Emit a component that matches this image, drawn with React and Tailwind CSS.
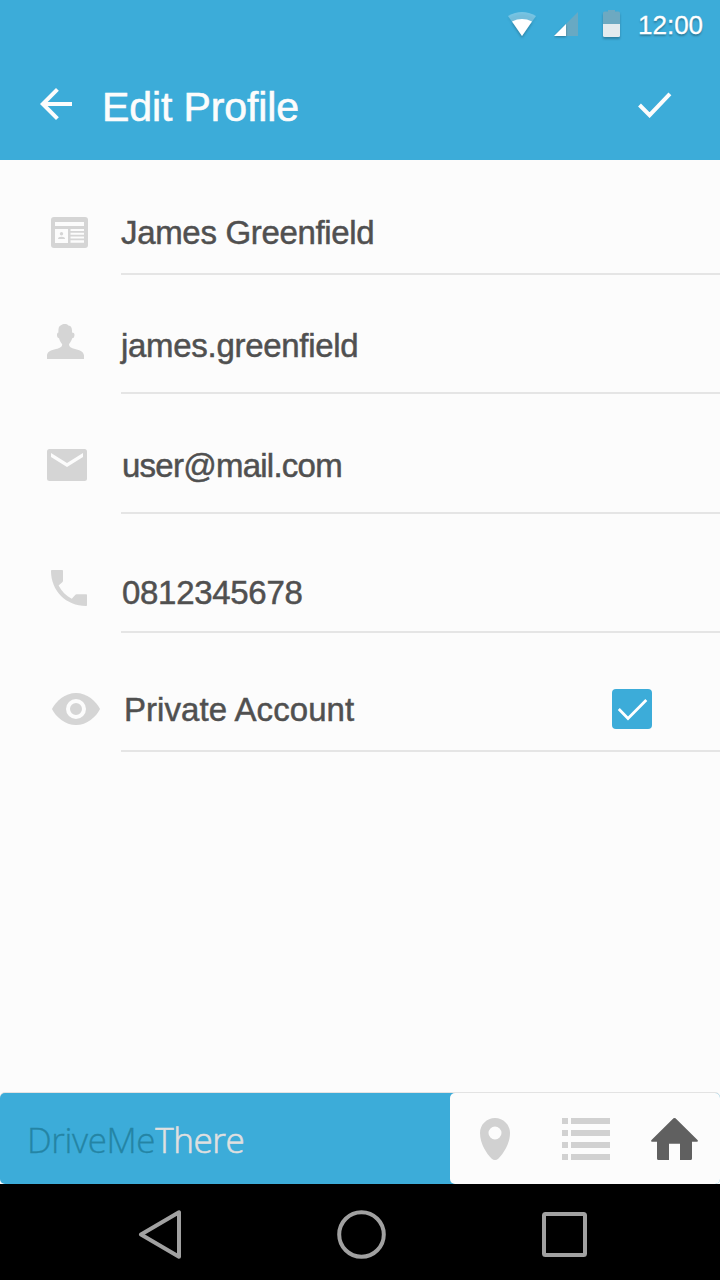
import React from "react";

function StatusBar() {
  return (
    <div className="flex h-12 items-start">
      <svg className="ml-[504px] mt-2 shrink-0 drop-shadow-[0_2px_1px_rgba(0,0,0,0.22)]" width="36" height="32" viewBox="504 8 36 32">
        <path d="M508 16 Q522 8 536 16 L522 36 Z" fill="#fff" fillOpacity=".3" />
        <path d="M512 21.500 Q522 16.600 532 21.500 L522 36 Z" fill="#fff" />
      </svg>
      <svg className="ml-[14px] mt-2 shrink-0" width="26" height="32" viewBox="554 8 26 32">
        <path d="M578 12 V36 H554 Z" fill="#68a9c3" />
        <path className="drop-shadow-[0_1px_1px_rgba(0,0,0,0.3)]" d="M566 24 V36 H554 Z" fill="#fff" />
      </svg>
      <svg className="ml-[21px] mt-2 shrink-0 drop-shadow-[0_2px_1px_rgba(0,0,0,0.25)]" width="22" height="32" viewBox="601 8 22 32">
        <path d="M603 24 V13 Q603 11.5 604.5 11.5 H608 V10 H615 V11.5 H618.500 Q620 11.5 620 13 V24 Z" fill="#6da9c1" />
        <path d="M603 24 H620 V35.500 Q620 37 618.5 37 H604.500 Q603 37 603 35.500 Z" fill="#e4ebee" />
      </svg>
      <span className="ml-[15px] mt-2 whitespace-nowrap text-[26px] leading-[34px] text-white [-webkit-text-stroke:0.3px_currentColor] [text-shadow:0_2px_2px_rgba(0,0,0,0.3)]">12:00</span>
    </div>
  );
}

function Header() {
  return (
    <header className="h-40 shrink-0 bg-[#3cacd9]">
      <StatusBar />
      <div className="flex items-start text-[#fcfcfc]">
        <svg className="ml-10 mt-10 shrink-0" width="32" height="32" viewBox="8 8 32 32" fill="currentColor">
          <path d="M40 22H15.660L26.830 10.830 24 8 8 24 24 40 26.830 37.170 15.660 26H40Z" />
        </svg>
        <h1 className="ml-[30px] mt-9 w-[300px] whitespace-nowrap text-[41px] leading-[46px] tracking-[-0.1px] [-webkit-text-stroke:0.6px_currentColor]">Edit Profile</h1>
        <svg className="ml-[236px] mt-[44px] shrink-0" width="34" height="26" viewBox="638 92 34 26" fill="none" stroke="currentColor" strokeWidth="4">
          <path d="M639.500 105 L649.600 115.200 L669.900 93.800" />
        </svg>
      </div>
    </header>
  );
}

function CardIcon() {
  return (
    <svg width="37" height="31" viewBox="51 217 37 31">
      <rect x="51" y="217" width="37" height="31" rx="3" fill="#d5d5d5" />
      <g fill="#fcfcfc">
        <path d="M55 222h29v4H55zM55 229h13v14H55zM70.500 229H84v2H70.500zM70.500 232.800H84v2H70.500zM70.500 236.400H84v2H70.500zM70.500 240.200H84v2.600H70.500z" />
      </g>
      <circle cx="61.500" cy="233.800" r="1.700" fill="#d5d5d5" />
      <path d="M58 239 Q58 236.800 61.500 236.800 Q65 236.800 65 239 Z" fill="#d5d5d5" />
    </svg>
  );
}

function PersonIcon() {
  return (
    <svg width="38" height="36" viewBox="47 324 38 36" fill="#d5d5d5">
      <path d="M47 359 V355.500 C47.200 352 51 350 56 349.100 C60 348.200 62.200 347 62.200 344.300 C60.500 342.300 59.600 340.500 59 338.300 C57.400 338 57 336.500 57 335 C57 333.600 57.400 332.800 58.400 332.600 C58.300 328.500 58.700 326 61 325.300 C63 323.600 67 323.600 68.300 325.400 C71.600 325.600 72.300 328.500 72 332.600 C73.400 332.600 74.600 333.300 74.500 335 C74.400 337 73.600 338.300 72.200 338.300 C71.500 340.600 70.500 342.300 69 344.300 C69 347 71 348.300 75 349.100 C80 350.100 83.600 352 84 355.500 V359 Z" />
    </svg>
  );
}

function MailIcon() {
  return (
    <svg width="40" height="32" viewBox="4 8 40 32">
      <rect x="4" y="8" width="40" height="32" rx="2.500" fill="#d5d5d5" />
      <path d="M8 12 L24 22 L40 12 V16 L24 26 L8 16Z" fill="#fcfcfc" />
    </svg>
  );
}

function PhoneIcon() {
  return (
    <svg width="36" height="36" viewBox="6 6 36 36" fill="#d5d5d5">
      <path d="M6 7c0-.6.4-1 1-1h10c.6 0 1 .4 1 1v9.500c0 .6-.1 1-.5 1.400l-3.900 3.700c2.890 5.660 7.510 10.290 13.180 13.170L30.200 31c.4-.5.8-.8 1.500-.8H41c.6 0 1 .4 1 1V41c0 .6-.4 1-1 1C21.220 42 6 26.780 6 7z" />
    </svg>
  );
}

function EyeIcon() {
  return (
    <svg width="48" height="32" viewBox="52 693 48 32">
      <path d="M52 709 C56 701 65 693 76 693 S96 701 100 709 C96 717 87 725 76 725 S56 717 52 709Z" fill="#d5d5d5" />
      <circle cx="76" cy="709" r="8" fill="#d5d5d5" stroke="#fcfcfc" strokeWidth="4" />
    </svg>
  );
}

function Field({ icon, iconClass, text, textClass, rowClass, children }) {
  return (
    <div className={`flex shrink-0 ${rowClass}`}>
      <div className={`w-[121px] shrink-0 ${iconClass}`}>{icon}</div>
      <div className="flex flex-1 items-start border-b-2 border-[#e5e5e5]">
        <span className={`whitespace-nowrap text-[33px] leading-[40px] text-[#505050] [-webkit-text-stroke:0.5px_currentColor] ${textClass}`}>{text}</span>
        {children}
      </div>
    </div>
  );
}

function Checkbox() {
  return (
    <span role="checkbox" aria-checked="true" className="ml-auto mr-[68px] mt-14 flex size-10 rounded-[4px] bg-[#3cacd9]">
      <svg width="40" height="40" viewBox="0 0 40 40" fill="none" stroke="#fff" strokeWidth="2.800">
        <path d="M6.800 20 L16 29.400 L34.300 11" />
      </svg>
    </span>
  );
}

function BottomBar() {
  return (
    <div className="flex h-[91px] shrink-0 rounded-[5px] bg-[#3cacd9] shadow-[0_-1px_0_#e3e3e3]">
      <div className="w-[450px] pl-[27px] pt-[25px] font-['Open_Sans',sans-serif] text-[35px] font-light leading-[44px] tracking-[-0.4px] whitespace-nowrap">
        <span className="text-[#2484a4] [-webkit-text-stroke:0.3px_currentColor]">DriveMe</span>
        <span className="text-[#e0e0e0] [-webkit-text-stroke:0.6px_currentColor]">There</span>
      </div>
      <nav className="flex w-[270px] items-start rounded-[5px] bg-[#fcfcfc]">
        <svg className="ml-[30px] mt-[25px]" width="30" height="42" viewBox="480 1118 30 42">
          <path fillRule="evenodd" fill="#d1d1d1" d="M495 1118 C486.700 1118 480 1124.700 480 1133 C480 1144 487 1154 491.500 1158.500 Q495 1161.500 498.500 1158.500 C503 1154 510 1144 510 1133 C510 1124.700 503.300 1118 495 1118Z M495 1126.500 a6.500 6.500 0 1 1 0 13 a6.500 6.500 0 1 1 0-13Z" />
        </svg>
        <svg className="ml-[52px] mt-[25px]" width="48" height="42" viewBox="0 0 48 42" fill="#d1d1d1">
          <path d="M0 0h6v6H0zM9 0h39v6H9zM0 12h6v6H0zM9 12h39v6H9zM0 24h6v6H0zM9 24h39v6H9zM0 36h6v6H0zM9 36h39v6H9z" />
        </svg>
        <svg className="ml-[41px] mt-[25px]" width="47" height="42" viewBox="651 1118 47 42" fill="#606060">
          <path d="M673.500 1118.300 Q674.500 1117.700 675.500 1118.300 L697.500 1140 Q698.500 1141.500 697 1141.700 H692 V1158.500 Q692 1160 690.500 1160 H680 V1143.700 H669 V1160 H658.500 Q657 1160 657 1158.500 V1141.700 H652 Q650.500 1141.500 651.500 1140 Z" />
        </svg>
      </nav>
    </div>
  );
}

function SystemNav() {
  return (
    <div className="flex h-24 shrink-0 items-start bg-black">
      <svg className="ml-[138px] mt-[26px]" width="44" height="49" viewBox="138 1210 44 49" fill="none" stroke="#a1a1a1" strokeWidth="4" strokeLinejoin="round">
        <path d="M179 1212.300 V1256.700 L141 1234.500Z" />
      </svg>
      <svg className="ml-[155px] mt-[26px]" width="49" height="49" viewBox="0 0 49 49" fill="none" stroke="#a1a1a1" strokeWidth="4">
        <circle cx="24.500" cy="24.500" r="22.300" />
      </svg>
      <svg className="ml-[156px] mt-[28px]" width="45" height="45" viewBox="0 0 45 45" fill="none" stroke="#a1a1a1" strokeWidth="4">
        <rect x="2" y="2" width="41" height="41" rx="1.500" />
      </svg>
    </div>
  );
}

export default function App() {
  return (
    <div className="flex h-[1280px] w-[720px] flex-col overflow-hidden bg-[#fcfcfc] font-['Liberation_Sans',Arial,sans-serif]">
      <Header />
      <main className="flex flex-1 flex-col">
        <Field rowClass="h-[115px]" iconClass="pl-[51px] pt-[57px]" textClass="pt-[53px] tracking-[-0.33px]" icon={<CardIcon />} text="James Greenfield" />
        <Field rowClass="h-[119px]" iconClass="pl-[47px] pt-[49px]" textClass="pt-[51px] tracking-[-0.3px]" icon={<PersonIcon />} text="james.greenfield" />
        <Field rowClass="h-[120px]" iconClass="pl-[47px] pt-[55px]" textClass="pl-px pt-[52px] tracking-[-0.75px]" icon={<MailIcon />} text="user@mail.com" />
        <Field rowClass="h-[119px]" iconClass="pl-[51px] pt-[56px]" textClass="pl-px pt-[59px] tracking-[-0.3px]" icon={<PhoneIcon />} text="0812345678" />
        <Field rowClass="h-[119px]" iconClass="pl-[52px] pt-[60px]" textClass="pl-[3px] pt-[57px] tracking-[0.06px]" icon={<EyeIcon />} text="Private Account">
          <Checkbox />
        </Field>
      </main>
      <BottomBar />
      <SystemNav />
    </div>
  );
}
